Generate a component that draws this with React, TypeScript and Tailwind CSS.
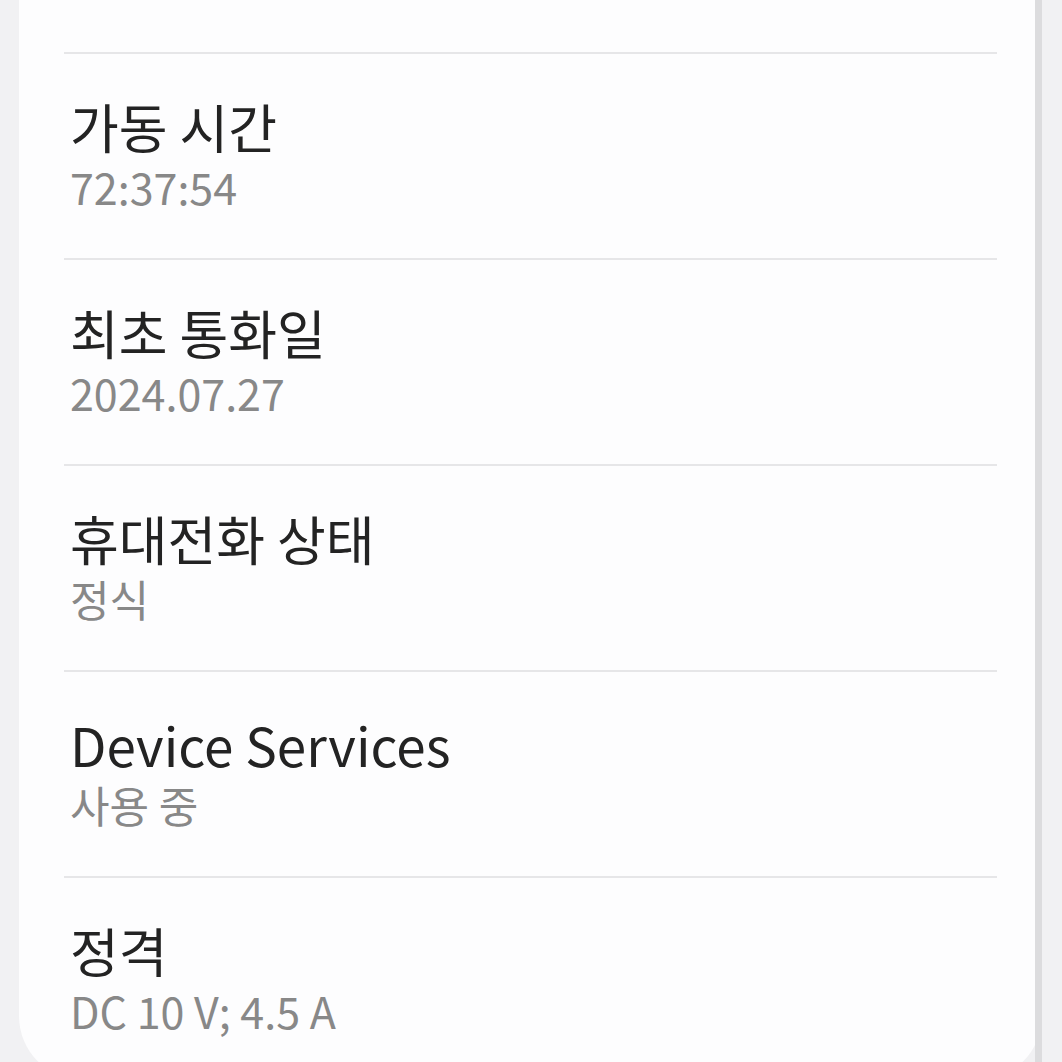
import React from 'react';

interface InfoRowProps {
    title: string
    value: string
    first?: boolean
}

const rows = [
    { title: '가동 시간', value: '72:37:54' },
    { title: '최초 통화일', value: '2024.07.27' },
    { title: '휴대전화 상태', value: '정식' },
    { title: 'Device Services', value: '사용 중' },
    { title: '정격', value: 'DC 10 V; 4.5 A' },
];

const InfoRow = ({ title, value, first = false }: InfoRowProps) => {
    return (
        <div className={`${first ? '' : 'border-t-2 border-[#e6e6e8]'} pt-[40px] pb-[44px] pl-[6px]`}>
            <div className="text-[53px] leading-[64px] text-[#232323]">{title}</div>
            <div className="text-[43px] leading-[56px] text-[#888888]">{value}</div>
        </div>
    );
};

const App = () => {
    return (
        <div
            className="h-[1062px] w-[1062px] overflow-hidden bg-[#f1f1f3] pl-[19px] pr-[20px]"
            style={{ fontFamily: '"Noto Sans CJK KR", "Noto Sans", sans-serif' }}
        >
            <div className="relative flex h-[1080px] flex-col rounded-b-[64px] bg-[#fdfdfe] px-[45px]">
                <div className="-mt-[152px]">
                    <InfoRow title="일련번호" value="R5CX60P5DBH" first />
                    {rows.map((row) => (
                        <InfoRow key={row.title} title={row.title} value={row.value} />
                    ))}
                </div>
                {/* scrollbar */}
                <div className="absolute right-0 top-0 h-full w-[7px] bg-[#dcdcde]" />
            </div>
        </div>
    );
};

export default App;
